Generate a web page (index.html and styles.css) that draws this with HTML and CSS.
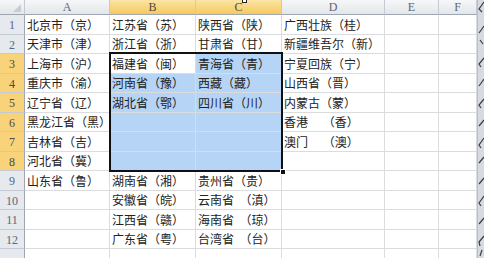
FILE: index.html
```html
<!DOCTYPE html>
<html lang="zh-CN">
<head>
  <meta charset="UTF-8" />
  <title>省份简称</title>
  <link rel="stylesheet" href="styles.css">
</head>
<body>

  <div class="sheet">
    <div class="grid">
      <!-- column headers -->
      <div class="hd corner"></div>
      <div class="hd">A</div>
      <div class="hd on">B</div>
      <div class="hd on">C</div>
      <div class="hd">D</div>
      <div class="hd">E</div>
      <div class="hd">F</div>

      <div class="rh">1</div>
      <div class="c">北京市（京）</div>
      <div class="c">江苏省（苏）</div>
      <div class="c">陕西省（陕）</div>
      <div class="c">广西壮族（桂）</div>
      <div class="c"></div>
      <div class="c"></div>

      <div class="rh">2</div>
      <div class="c">天津市（津）</div>
      <div class="c">浙江省（浙）</div>
      <div class="c">甘肃省（甘）</div>
      <div class="c">新疆维吾尔（新）</div>
      <div class="c"></div>
      <div class="c"></div>

      <div class="rh on">3</div>
      <div class="c">上海市（沪）</div>
      <div class="c active">福建省（闽）</div>
      <div class="c sel">青海省（青）</div>
      <div class="c">宁夏回族（宁）</div>
      <div class="c"></div>
      <div class="c"></div>

      <div class="rh on">4</div>
      <div class="c">重庆市（渝）</div>
      <div class="c sel">河南省（豫）</div>
      <div class="c sel">西藏（藏）</div>
      <div class="c">山西省（晋）</div>
      <div class="c"></div>
      <div class="c"></div>

      <div class="rh on">5</div>
      <div class="c">辽宁省（辽）</div>
      <div class="c sel">湖北省（鄂）</div>
      <div class="c sel">四川省（川）</div>
      <div class="c">内蒙古（蒙）</div>
      <div class="c"></div>
      <div class="c"></div>

      <div class="rh on">6</div>
      <div class="c">黑龙江省（黑）</div>
      <div class="c sel"></div>
      <div class="c sel"></div>
      <div class="c">香港　 （香）</div>
      <div class="c"></div>
      <div class="c"></div>

      <div class="rh on">7</div>
      <div class="c">吉林省（吉）</div>
      <div class="c sel"></div>
      <div class="c sel"></div>
      <div class="c">澳门　 （澳）</div>
      <div class="c"></div>
      <div class="c"></div>

      <div class="rh on">8</div>
      <div class="c">河北省（冀）</div>
      <div class="c sel"></div>
      <div class="c sel"></div>
      <div class="c"></div>
      <div class="c"></div>
      <div class="c"></div>

      <div class="rh">9</div>
      <div class="c">山东省（鲁）</div>
      <div class="c">湖南省（湘）</div>
      <div class="c">贵州省（贵）</div>
      <div class="c"></div>
      <div class="c"></div>
      <div class="c"></div>

      <div class="rh">10</div>
      <div class="c"></div>
      <div class="c">安徽省（皖）</div>
      <div class="c">云南省  （滇）</div>
      <div class="c"></div>
      <div class="c"></div>
      <div class="c"></div>

      <div class="rh">11</div>
      <div class="c"></div>
      <div class="c">江西省（赣）</div>
      <div class="c">海南省  （琼）</div>
      <div class="c"></div>
      <div class="c"></div>
      <div class="c"></div>

      <div class="rh">12</div>
      <div class="c"></div>
      <div class="c">广东省（粤）</div>
      <div class="c">台湾省  （台）</div>
      <div class="c"></div>
      <div class="c"></div>
      <div class="c"></div>

      <div class="rh"></div>
      <div class="c"></div>
      <div class="c"></div>
      <div class="c"></div>
      <div class="c"></div>
      <div class="c"></div>
      <div class="c"></div>
    </div>

    <!-- selection outline B3:C8 -->
    <div class="selection"><span class="handle"></span></div>
    <span class="cursor-mark"></span>
  </div>

  <div class="torn-edge">
    <svg width="7" height="258" viewBox="0 0 7 258">
      <path d="M6 2 L1 9 L4 12 M6 26 L1 33 M2 40 L5 44 M6 58 L1 64 L3 67 M6 79 L1 86 M6 99 L1 105 L3 108 M6 120 L1 126 M6 138 L1 145 L3 148 M6 157 L1 163 M6 178 L1 184 M6 196 L1 203 L3 206 M6 218 L1 224 M6 236 L1 242 L2 246 M4 250 L2 256" fill="none" stroke="#3c3c3c" stroke-width="1.2"/>
    </svg>
  </div>

</body>
</html>
```

FILE: styles.css
```css
:root {
  --grid-line: #dadcdd;
  --head-line: #c5cad2;
  --head-edge: #9ea6b2;
  --head-bg: #e6e9ee;
  --head-text: #5b677a;
  --head-on: #f8d37a;
  --sel-fill: #b5d4f6;
  --cell-text: #222;
}

* {
  box-sizing: border-box;
}

body {
  margin: 0;
  background: #fff;
  display: flex;
  width: 484px;
  height: 258px;
  overflow: hidden;
}

.sheet {
  position: relative;
  width: 477px;
  height: 258px;
  overflow: hidden;
}

.grid {
  display: grid;
  grid-template-columns: 25px 85px 86px 86px 103px 54px 38px;
  grid-template-rows: 15px repeat(12, 19.5px) 12px;
  font-family: "Noto Sans CJK SC", "Noto Sans", sans-serif;
  font-size: 12px;
}

.c {
  display: flex;
  align-items: flex-end;
  padding: 0 2px 1px;
  line-height: 17px;
  color: var(--cell-text);
  white-space: pre;
  border-right: 1px solid var(--grid-line);
  border-bottom: 1px solid var(--grid-line);
}

.hd,
.rh {
  display: flex;
  align-items: center;
  justify-content: center;
  font-family: "Liberation Serif", serif;
  font-size: 12px;
  color: var(--head-text);
  background: var(--head-bg);
  border-right: 1px solid var(--head-line);
  border-bottom: 1px solid var(--head-line);
}

.hd {
  line-height: 14px;
  background: linear-gradient(to bottom, #f6f7f8, #e3e6ea);
  border-bottom-color: var(--head-edge);
}

.rh {
  padding-top: 3px;
  border-right-color: var(--head-edge);
}

.hd.on,
.rh.on {
  color: #4e4a3e;
  background: var(--head-on);
}

.hd.on {
  background: linear-gradient(to bottom, #fbe4a6, #f6c95c);
}

.corner {
  position: relative;
}

.corner::after {
  content: "";
  position: absolute;
  right: 3px;
  bottom: 2px;
  border-left: 8px solid transparent;
  border-bottom: 8px solid #c9cdd3;
}

.c.sel {
  background: var(--sel-fill);
}

.c.active {
  background: #fff;
}

.selection {
  position: absolute;
  left: 109px;
  top: 52px;
  width: 174px;
  height: 120px;
  border: 2px solid #111;
  pointer-events: none;
}

.handle {
  position: absolute;
  right: -5px;
  bottom: -5px;
  width: 6px;
  height: 6px;
  background: #111;
  border: 1px solid #fff;
}

.cursor-mark {
  position: absolute;
  left: 242px;
  top: -2px;
  width: 5px;
  height: 5px;
  background: #fff;
  border: 1px solid #222;
}

.torn-edge {
  width: 7px;
  height: 258px;
  background: #d6dae1;
  border-left: 1px solid #b9bfc8;
}

.torn-edge svg {
  display: block;
}
```
